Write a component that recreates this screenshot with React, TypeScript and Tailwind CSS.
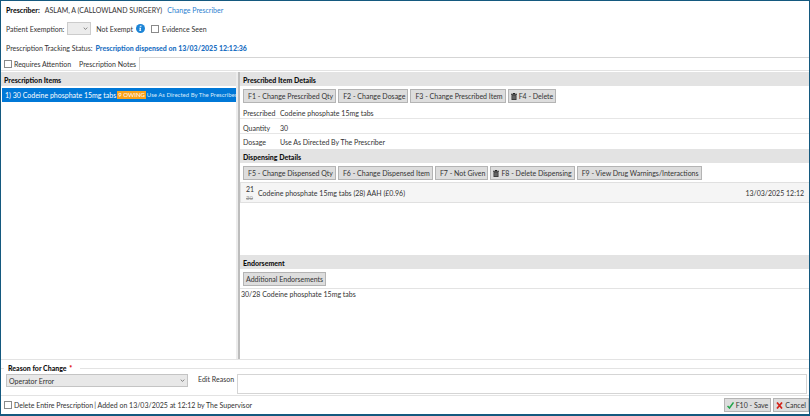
import type { ReactNode } from "react";
import { useState } from "react";

const buttonClass =
  "flex h-[14px] shrink-0 items-center gap-[2px] border border-[#b4b4b4] bg-[#dddddd] whitespace-nowrap";

function TrashIcon() {
  return (
    <svg viewBox="0 0 12 14" className="h-[7px] w-[6px]" aria-hidden="true">
      <path d="M4 0h4v1.500h4v2H0v-2h4z" fill="#222" />
      <path d="M1 4.200h10V14H1z" fill="#333" />
      <path d="M3.800 5.500v7M6 5.500v7M8.200 5.500v7" stroke="#bbb" strokeWidth="0.9" />
    </svg>
  );
}

function ActionButton({ children, icon, plain }: { children: ReactNode; icon?: ReactNode; plain?: boolean }) {
  return (
    <button type="button" className={`${buttonClass} ${icon || plain ? "px-[2px]" : "pr-[2px] pl-[4px]"}`}>
      {icon}
      {children}
    </button>
  );
}

function SectionHeader({ children }: { children: ReactNode }) {
  return <h2 className="h-[14px] bg-[#e3e3e3] px-[3px] font-black text-[#111] leading-[16px]">{children}</h2>;
}

function CheckBox({ id }: { id: string }) {
  return (
    <input
      id={id}
      type="checkbox"
      className="size-[8px] shrink-0 appearance-none border border-[#8a8a8a] bg-white checked:bg-[#0078d7]"
    />
  );
}

function Chevron() {
  return (
    <svg viewBox="0 0 8 5" className="pointer-events-none col-start-1 row-start-1 mr-[3px] h-[3px] w-[5px] self-center justify-self-end" aria-hidden="true">
      <path d="M1 1l3 3 3-3" fill="none" stroke="#666" strokeWidth="1.300" />
    </svg>
  );
}

function DetailRow({ label, children }: { label: string; children: ReactNode }) {
  return (
    <div className="flex h-[15px] items-end border-b border-[#e6e6e6] pl-[3px] last:items-center last:border-b-0">
      <dt className="w-[37px]">{label}</dt>
      <dd>{children}</dd>
    </div>
  );
}

export default function App() {
  const [endorsement, setEndorsement] = useState("30/28 Codeine phosphate 15mg tabs");

  return (
    <main className="flex min-h-screen flex-col overflow-hidden border border-b-2 border-[#14597f] bg-white font-['Lato','Noto_Sans',sans-serif] text-[7px] leading-[10px] text-[#333]">
      <header className="flex flex-col">
        <div className="flex h-[18px] items-center pl-[5px]">
          <span className="font-black text-[#111]">Prescriber:</span>
          <span className="ml-[5px]">ASLAM, A (CALLOWLAND SURGERY)</span>
          <a href="#prescriber" className="ml-[5px] text-[#2b7fd0]">Change Prescriber</a>
        </div>
        <div className="flex h-[19px] items-center pl-[5px]">
          <label htmlFor="exemption">Patient Exemption:</label>
          <span className="ml-[3px] grid">
            <select id="exemption" className="col-start-1 row-start-1 h-[13px] w-[24px] appearance-none border border-[#cccccc] bg-[#ececec]" />
            <Chevron />
          </span>
          <span className="ml-[5px]">Not Exempt</span>
          <svg viewBox="0 0 16 16" className="ml-[3px] size-[9px]" aria-hidden="true">
            <circle cx="8" cy="8" r="8" fill="#1c84d6" />
            <path d="M7 3h3l-.5 2H6.500zM6 6.500h3.200L8.200 11h1.200l-.4 1.500H5.800L6.800 8H5.600z" fill="#fff" />
          </svg>
          <span className="ml-[6px] flex items-center gap-[3px]">
            <CheckBox id="evidence" />
            <label htmlFor="evidence">Evidence Seen</label>
          </span>
        </div>
        <div className="flex h-[19px] items-center pl-[5px]">
          <span>Prescription Tracking Status:</span>
          <span className="ml-[3px] font-black text-[#1b70c2]">Prescription dispensed on 13/03/2025 12:12:36</span>
        </div>
        <div className="flex h-[14px] items-center border-b border-[#e3e3e3] pl-[3px]">
          <CheckBox id="attention" />
          <label htmlFor="attention" className="ml-[2px]">Requires Attention</label>
          <label htmlFor="notes" className="ml-[8px]">Prescription Notes</label>
          <input id="notes" className="ml-[3px] h-[13px] min-w-0 flex-1 border-t border-l border-[#d5d5d5] px-[2px] outline-none" />
        </div>
      </header>

      <div className="mt-px flex flex-1 border-b border-[#e3e3e3]">
        <section className="w-[235px] shrink-0">
          <SectionHeader>Prescription Items</SectionHeader>
          <ul className="mt-[2px] pl-px">
            <li className="flex h-[14px] items-center overflow-hidden bg-[#0078d7] pl-[3px] whitespace-nowrap text-white">
              <span>1) 30 Codeine phosphate 15mg tabs</span>
              <span className="ml-px h-[8px] bg-[#f9a21b] px-px text-[6px] leading-[8px]">9 OWING</span>
              <span className="ml-px text-[6px] text-[#d8eafa]">Use As Directed By The Prescriber</span>
            </li>
          </ul>
        </section>
        <div className="w-[4px] shrink-0 border-r-2 border-[#bdbdbd] bg-[#ececec]" />
        <div className="flex min-w-0 flex-1 flex-col">
          <section>
            <SectionHeader>Prescribed Item Details</SectionHeader>
            <div className="flex gap-[2px] px-[3px] pt-[3px] pb-px">
              <ActionButton>F1 - Change Prescribed Qty</ActionButton>
              <ActionButton>F2 - Change Dosage</ActionButton>
              <ActionButton>F3 - Change Prescribed Item</ActionButton>
              <ActionButton icon={<TrashIcon />}>F4 - Delete</ActionButton>
            </div>
            <dl>
              <DetailRow label="Prescribed">Codeine phosphate 15mg tabs</DetailRow>
              <DetailRow label="Quantity">30</DetailRow>
              <DetailRow label="Dosage">Use As Directed By The Prescriber</DetailRow>
            </dl>
          </section>
          <section className="flex min-h-[106px] flex-col">
            <SectionHeader>Dispensing Details</SectionHeader>
            <div className="flex gap-[2px] px-[3px] pt-[3px] pb-[2px]">
              <ActionButton>F5 - Change Dispensed Qty</ActionButton>
              <ActionButton>F6 - Change Dispensed Item</ActionButton>
              <ActionButton>F7 - Not Given</ActionButton>
              <ActionButton icon={<TrashIcon />}>F8 - Delete Dispensing</ActionButton>
              <ActionButton>F9 - View Drug Warnings/Interactions</ActionButton>
            </div>
            <div className="flex h-[21px] items-center border-y border-l border-[#e0e0e0] bg-[#f5f5f5] pr-[5px] pl-[5px]">
              <div className="flex w-[12px] flex-col">
                <span>21</span>
                <s className="text-[6px] leading-[8px] text-[#999]">30</s>
              </div>
              <span className="flex-1">Codeine phosphate 15mg tabs (28) AAH (£0.96)</span>
              <time dateTime="2025-03-13T12:12">13/03/2025 12:12</time>
            </div>
          </section>
          <section className="flex flex-1 flex-col">
            <SectionHeader>Endorsement</SectionHeader>
            <div className="flex border-b border-[#e3e3e3] px-[3px] pt-[3px] pb-[2px]">
              <ActionButton plain>Additional Endorsements</ActionButton>
            </div>
            <textarea
              aria-label="Endorsement"
              value={endorsement}
              onChange={(event) => setEndorsement(event.target.value)}
              className="w-full flex-1 resize-none px-px outline-none"
            />
          </section>
        </div>
      </div>

      <fieldset className="mt-[2px] flex flex-col">
        <div className="flex h-[12px] items-center">
          <span className="mr-[4px] w-[3px] border-t border-[#e3e3e3]" />
          <label htmlFor="reason" className="font-black text-[#111]">
            Reason for Change <span className="ml-px text-[#e00000]">*</span>
          </label>
          <span className="ml-[8px] flex-1 border-t border-[#e3e3e3]" />
        </div>
        <div className="flex items-start pr-[2px] pl-[5px]">
          <span className="grid w-[182px]">
            <select id="reason" className="col-start-1 row-start-1 h-[13px] appearance-none border border-[#c4c4c4] bg-[#e8e8e8] px-[2px]">
              <option>Operator Error</option>
            </select>
            <Chevron />
          </span>
          <label htmlFor="edit-reason" className="ml-[10px] w-[39px]">Edit Reason</label>
          <textarea id="edit-reason" className="h-[20px] min-w-0 flex-1 resize-none border border-[#d5d5d5] outline-none" />
        </div>
      </fieldset>

      <footer className="mt-px flex h-[19px] items-center border-t border-[#e3e3e3] pl-[3px]">
        <CheckBox id="delete-all" />
        <label htmlFor="delete-all" className="ml-[2px]">Delete Entire Prescription</label>
        <span className="ml-px flex-1">| Added on 13/03/2025 at 12:12 by The Supervisor</span>
        <div className="flex gap-[2px]">
          <ActionButton
            icon={
              <svg viewBox="0 0 14 14" className="size-[7px]" aria-hidden="true">
                <path d="M1 8l4 4 8-11" fill="none" stroke="#21a54a" strokeWidth="3" />
              </svg>
            }
          >
            F10 - Save
          </ActionButton>
          <ActionButton
            icon={
              <svg viewBox="0 0 14 14" className="size-[7px]" aria-hidden="true">
                <path d="M2 1l10 12M12 1L2 13" fill="none" stroke="#d3251c" strokeWidth="3.500" />
              </svg>
            }
          >
            Cancel
          </ActionButton>
        </div>
      </footer>
    </main>
  );
}
